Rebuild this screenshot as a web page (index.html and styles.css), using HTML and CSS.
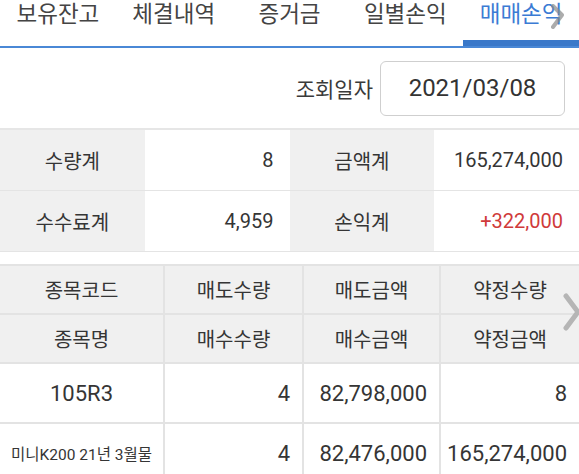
FILE: index.html
```html
<!DOCTYPE html>
<html lang="ko">
<head>
<meta charset="utf-8">
<title>매매손익</title>
<link rel="stylesheet" href="styles.css">
</head>
<body>
<div class="tabs">
  <div class="tab">보유잔고</div>
  <div class="tab">체결내역</div>
  <div class="tab">증거금</div>
  <div class="tab">일별손익</div>
  <div class="tab active">매매손익</div>
  <svg class="tab-scroll" width="18" height="32" viewBox="0 0 18 32"><polyline points="4,6 13,15 4,27" fill="none" stroke="#8a8a8a" stroke-width="4" stroke-linecap="round" stroke-linejoin="round"/></svg>
</div>

<div class="date-row">
  <span class="date-label">조회일자</span>
  <div class="date-box">2021/03/08</div>
</div>

<div class="summary">
  <div class="s-label">수량계</div>
  <div class="s-value">8</div>
  <div class="s-label">금액계</div>
  <div class="s-value">165,274,000</div>
  <div class="s-label">수수료계</div>
  <div class="s-value">4,959</div>
  <div class="s-label">손익계</div>
  <div class="s-value plus">+322,000</div>
</div>

<div class="table-wrap">
  <div class="grid">
    <div class="th">종목코드</div>
    <div class="th">매도수량</div>
    <div class="th">매도금액</div>
    <div class="th">약정수량</div>
    <div class="th">종목명</div>
    <div class="th">매수수량</div>
    <div class="th">매수금액</div>
    <div class="th">약정금액</div>
    <div class="td center">105R3</div>
    <div class="td">4</div>
    <div class="td">82,798,000</div>
    <div class="td">8</div>
    <div class="td center name">미니K200 21년 3월물</div>
    <div class="td">4</div>
    <div class="td">82,476,000</div>
    <div class="td">165,274,000</div>
  </div>
  <svg class="more-arrow" width="20" height="40" viewBox="0 0 20 40"><polyline points="4,3 16,19 4,35" fill="none" stroke="#b5b5b5" stroke-width="5" stroke-linecap="round" stroke-linejoin="round"/></svg>
</div>
</body>
</html>
```

FILE: styles.css
```css
html, body {
  margin: 0;
  padding: 0;
  background: #ffffff;
}

body {
  width: 579px;
  height: 474px;
  overflow: hidden;
  font-family: Roboto, "Noto Sans CJK KR", sans-serif;
  color: #353535;
}

.tabs {
  position: relative;
  display: grid;
  grid-template-columns: repeat(5, 1fr);
  height: 46px;
  border-bottom: 2px solid #4a88d6;
}

.tab {
  font-size: 22.5px;
  line-height: 28px;
  text-align: center;
  color: #444444;
  box-sizing: border-box;
  height: 46px;
}

.tab.active {
  color: #3b7bd4;
  border-bottom: 6px solid #3a78c9;
}

.tab-scroll {
  position: absolute;
  left: 549px;
  top: 0;
  opacity: 0.7;
}

.date-row {
  display: flex;
  justify-content: flex-end;
  align-items: center;
  gap: 7px;
  height: 80px;
  padding-right: 14px;
  border-bottom: 2px solid #e6e6e6;
}

.date-label {
  font-size: 21px;
  color: #3a3a3a;
}

.date-box {
  box-sizing: border-box;
  width: 185px;
  height: 55px;
  border: 1px solid #cfcfcf;
  border-radius: 6px;
  display: flex;
  align-items: center;
  justify-content: center;
  font-size: 24px;
  color: #333333;
}

.summary {
  display: grid;
  grid-template-columns: repeat(4, 1fr);
  margin-bottom: 12px;
}

.s-label,
.s-value {
  height: 60px;
  border-bottom: 1px solid #e4e4e4;
  display: flex;
  align-items: center;
  font-size: 20px;
}

.s-label {
  background: #f0f0f0;
  justify-content: center;
}

.s-value {
  justify-content: flex-end;
  padding-right: 16px;
}

.plus {
  color: #d03a3a;
}

.table-wrap {
  position: relative;
}

.grid {
  display: grid;
  grid-template-columns: 163px 137px 135px 1fr;
  grid-template-rows: 47px 47px 58px 58px;
  gap: 2px;
  padding-top: 2px;
  background: #e3e3e3;
}

.th {
  background: #f0f0f0;
  display: flex;
  align-items: center;
  justify-content: center;
  font-size: 20px;
}

.td {
  background: #ffffff;
  display: flex;
  align-items: center;
  justify-content: flex-end;
  padding-right: 12px;
  font-size: 22px;
}

.td.center {
  justify-content: center;
  padding-right: 0;
}

.td.name {
  font-size: 15.5px;
}

.more-arrow {
  position: absolute;
  right: -3px;
  top: 29px;
}
```
